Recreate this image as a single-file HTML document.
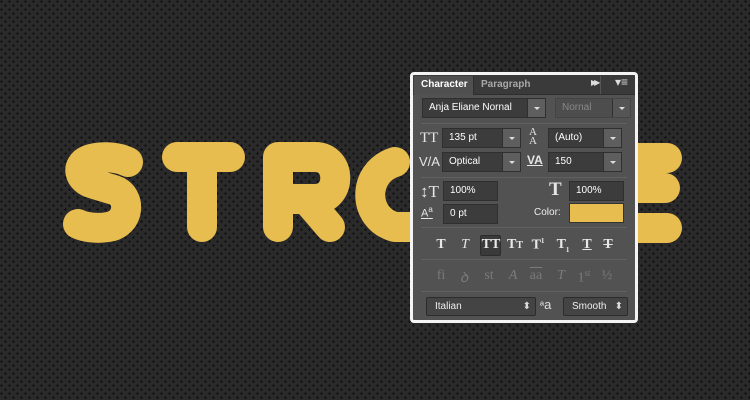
<!DOCTYPE html>
<html><head><meta charset="utf-8"><style>
*{margin:0;padding:0;box-sizing:border-box}
body{width:750px;height:400px;overflow:hidden;background:#2a2a2a;font-family:"Liberation Sans",sans-serif;position:relative}
.a{position:absolute}
.panel{left:410px;top:72px;width:228px;height:251px;border:3px solid #f4f4f4;border-radius:4px;background:#525252;overflow:hidden}
.tabs{left:0;top:0;width:222px;height:20px;background:#3a3a3a;border-bottom:1px solid #2e2e2e}
.tab{font-size:10px;font-weight:bold;line-height:18px}
.inp{background:#3c3c3c;border:1px solid #2f2f2f;color:#fff;font-size:10px;line-height:18px;padding-left:6px;height:20px}
.dd{width:18px;height:18px;background:#5e5e5e;border-left:1px solid #2f2f2f;right:0;top:0}
.dd:after{content:"";position:absolute;left:6px;top:8px;border-left:3px solid transparent;border-right:3px solid transparent;border-top:3px solid #ddd}
.sep{left:8px;width:206px;height:1px;background:#3b3b3b;border-bottom:1px solid #606060}
.ico{color:#e6e6e6;font-family:"Liberation Serif",serif;font-size:15px}
.st{font-family:"Liberation Serif",serif;font-size:14px;font-weight:bold;color:#e8e8e8;text-align:center;width:18px}
.lg{font-family:"Liberation Serif",serif;font-size:14px;color:#7a7a7a;text-align:center;width:20px}
.sel{background:#444;border:1px solid #2c2c2c;border-radius:2px;color:#eee;font-size:10px;line-height:17px;padding-left:8px;height:19px}
.sel:after{content:"⬍";position:absolute;right:4px;top:0;font-size:10px;color:#ddd}
</style></head><body>
<svg class="a" style="left:0;top:0" width="750" height="400">
<defs><pattern id="p" width="8" height="8" patternUnits="userSpaceOnUse">
<path d="M1 0h1v1h1v1h-1v1h-1v-1h-1v-1h1z" fill="#141414"/>
<path d="M5 4h1v1h1v1h-1v1h-1v-1h-1v-1h1z" fill="#141414"/>
</pattern></defs>
<rect width="750" height="400" fill="url(#p)"/>
<g fill="none" stroke="#e8bd4f" stroke-width="30" stroke-linecap="round" stroke-linejoin="round">
<path d="M128 162 C116 156 98 156 88 160 C76 165 78 180 94 184 L114 190 C132 196 130 224 108 227 C96 229 84 227 78 224"/>
<path d="M177 157 H230 M202 160 V227"/>
<path d="M278 227 V157 H315 C342 157 342 199 315 199 H290 M306 199 L330 227"/>
<path d="M395 162 C362 172 362 218 395 227 L420 227"/>
<path d="M620 158 H667 M620 188 H665 M620 228 H667"/>
</g>
</svg>
<div class="a panel">
 <div class="a tabs">
  <div class="a tab" style="left:1px;top:1px;width:60px;height:19px;background:#505050;color:#fff;padding-left:7px;border-right:1px solid #2e2e2e">Character</div>
  <div class="a tab" style="left:68px;top:1px;color:#a8a8a8">Paragraph</div>
  <div class="a" style="left:187px;top:1px;width:0;height:18px;border-left:1px solid #555"></div>
  <div class="a" style="left:178px;top:3px;color:#ddd;font-size:8px;letter-spacing:-3px">▶▶</div>
  <div class="a" style="left:202px;top:0px;color:#ddd;font-size:12px">▾≡</div>
 </div>
 <div class="a inp" style="left:9px;top:23px;width:124px">Anja Eliane Nornal<div class="a dd"></div></div>
 <div class="a inp" style="left:142px;top:23px;width:76px;background:#4d4d4d;color:#888;border-color:#444">Nornal<div class="a dd" style="background:#555"></div></div>
 <div class="a sep" style="top:48px"></div>
 <div class="a ico" style="left:7px;top:55px">TT</div>
 <div class="a inp" style="left:29px;top:53px;width:79px">135 pt<div class="a dd"></div></div>
 <div class="a ico" style="left:116px;top:53px;font-size:11px;line-height:9px">A<br>A</div>
 <div class="a inp" style="left:135px;top:53px;width:74px">(Auto)<div class="a dd"></div></div>
 <div class="a ico" style="left:6px;top:79px;font-family:'Liberation Sans';font-size:13px">V/A</div>
 <div class="a inp" style="left:29px;top:77px;width:79px">Optical<div class="a dd"></div></div>
 <div class="a ico" style="left:114px;top:78px;font-family:'Liberation Sans';font-size:12px;font-weight:bold;text-decoration:underline">VA</div>
 <div class="a inp" style="left:135px;top:77px;width:74px">150<div class="a dd"></div></div>
 <div class="a sep" style="top:102px"></div>
 <div class="a ico" style="left:7px;top:107px;font-size:17px">↕T</div>
 <div class="a inp" style="left:30px;top:106px;width:55px">100%</div>
 <div class="a ico" style="left:136px;top:104px;font-size:19px;font-weight:bold">T</div>
 <div class="a inp" style="left:156px;top:106px;width:55px">100%</div>
 <div class="a ico" style="left:8px;top:130px;font-family:'Liberation Sans';font-size:11px;text-decoration:underline">A<sup style="font-size:8px">a</sup></div>
 <div class="a inp" style="left:30px;top:129px;width:55px">0 pt</div>
 <div class="a" style="left:121px;top:132px;font-size:10px;color:#eee">Color:</div>
 <div class="a" style="left:156px;top:128px;width:55px;height:20px;background:#e8bd4f;border:1px solid #333"></div>
 <div class="a sep" style="top:152px"></div>
 <div class="a" style="left:67px;top:160px;width:21px;height:21px;background:#3a3a3a;border:1px solid #2c2c2c;border-radius:2px"></div>
 <div class="a st" style="left:19px;top:162px">T</div>
 <div class="a st" style="left:43px;top:162px;font-style:italic;font-weight:normal">T</div>
 <div class="a st" style="left:68px;top:162px;width:20px">TT</div>
 <div class="a st" style="left:92px;top:162px;width:20px">T<span style="font-size:10px">T</span></div>
 <div class="a st" style="left:116px;top:162px">T<sup style="font-size:7px">1</sup></div>
 <div class="a st" style="left:141px;top:162px">T<sub style="font-size:7px">1</sub></div>
 <div class="a st" style="left:165px;top:162px;text-decoration:underline">T</div>
 <div class="a st" style="left:186px;top:162px;text-decoration:line-through">T</div>
 <div class="a sep" style="top:184px"></div>
 <div class="a lg" style="left:18px;top:193px">fi</div>
 <div class="a lg" style="left:41px;top:193px;font-style:italic">ꝺ</div>
 <div class="a lg" style="left:66px;top:193px">st</div>
 <div class="a lg" style="left:90px;top:193px;font-style:italic">A</div>
 <div class="a lg" style="left:113px;top:193px;text-decoration:overline">aa</div>
 <div class="a lg" style="left:138px;top:193px;font-style:italic">T</div>
 <div class="a lg" style="left:161px;top:193px">1<sup style="font-size:9px">st</sup></div>
 <div class="a lg" style="left:184px;top:193px">½</div>
 <div class="a sep" style="top:216px"></div>
 <div class="a sel" style="left:13px;top:222px;width:110px">Italian</div>
 <div class="a" style="left:127px;top:222px;color:#ddd;font-size:11px">ª<span style="font-size:13px">a</span></div>
 <div class="a sel" style="left:150px;top:222px;width:65px">Smooth</div>
</div>
</body></html>
